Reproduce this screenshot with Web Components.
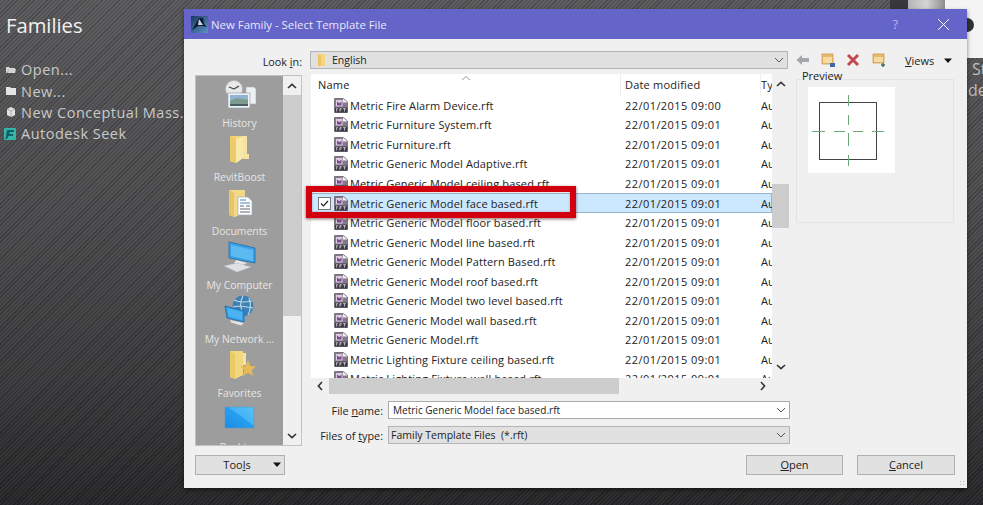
<!DOCTYPE html>
<html lang="en"><head><meta charset="utf-8"><title>New Family</title>
<style>
html,body{margin:0;padding:0;width:983px;height:505px;overflow:hidden;font-family:"Open Sans","Noto Sans",sans-serif}
</style></head><body>
<revit-desktop>
  <family-sidebar></family-sidebar>
  <template-dialog></template-dialog>
</revit-desktop>
<script>
const ICONS={
rft:`<svg viewBox="0 0 14 15" width="14" height="15"><path d="M.5.5h9l4 3.500v10.500H.5z" fill="#85798c" stroke="#5e5563" stroke-width=".7"/><path d="M9 .5v4h4.500z" fill="#f4f4f4"/><rect x="2" y="2" width="6.500" height="6.500" fill="#dccde0"/><path d="M3 7.500V3.500l2.500 1.800L7.500 3.500v4z" fill="#7a4a8c"/><rect x="1" y="9.500" width="12.300" height="5" fill="#3f3a47"/><path d="M2.200 10.700h1.800M2.600 10.700v2.800M5.800 10.700v2.800M5.800 10.700h2M5.800 12h1.600M9 10.700h3M10.500 10.700v2.800" stroke="#e6e6e6" stroke-width=".7" fill="none"/></svg>`,
folder:`<svg viewBox="0 0 32 32" width="32" height="32"><path d="M6 3h13v22l-7 5-6-2z" fill="#f0d27a"/><path d="M19 3h4v18h2v5h-6z" fill="#f6e3a1"/><path d="M12 6l7-3v22l-7 5z" fill="#fae8a8"/><path d="M6 3v25l6 2V6z" fill="#eccb6a"/></svg>`,
docs:`<svg viewBox="0 0 32 32" width="32" height="32"><path d="M5 3h16v22l-10 5-6-2z" fill="#f3d888"/><path d="M5 3v25l5 2V6z" fill="#e8c665"/><path d="M14 10h10l4 4v14H14z" fill="#fff" stroke="#9fb0bd" stroke-width=".7"/><path d="M16 13h6M16 16h10" stroke="#4d7fb5" stroke-width="1.200"/><path d="M16 19h4M22 19h4M16 22h10M16 25h10" stroke="#5a6a77" stroke-width="1"/></svg>`,
history:`<svg viewBox="0 0 32 30" width="32" height="30"><path d="M22 7h8l2 2v15H22z" fill="#eef1f4" stroke="#a7b0b8" stroke-width=".6"/><circle cx="10" cy="9" r="8.500" fill="#e6e8e9" stroke="#b5b5b5" stroke-width=".7"/><path d="M10 9l5-3M10 9L5 7" stroke="#444" stroke-width="1.300" fill="none"/><rect x="4" y="13" width="22" height="15" fill="#f0f2f4" stroke="#94a4b0" stroke-width=".7"/><rect x="6" y="15" width="18" height="6" fill="#8fb3d0"/><path d="M6 21l7-3 11 2v5H6z" fill="#7c9b8e"/><rect x="6" y="24" width="18" height="2" fill="#4a5e66"/></svg>`,
computer:`<svg viewBox="0 0 34 32" width="34" height="32"><path d="M6 1l26 6v15L6 17z" fill="#3aa0e8" stroke="#1d6ea8" stroke-width=".8"/><path d="M8 4l22 5v11L8 15z" fill="#5cb9f2"/><path d="M13 19l11 3-4 2-9-2z" fill="#e4e7ea"/><path d="M1 25l13-3 14 4-14 5z" fill="#dfe2e5" stroke="#b9bcbf" stroke-width=".5"/></svg>`,
network:`<svg viewBox="0 0 32 32" width="32" height="32"><circle cx="19" cy="11" r="10.500" fill="#3f80b2"/><path d="M10 5c6 3 13 2 18 1M9 12c6-2 13 0 20 1M19 .5c-3 6-3 14 1 21M25 3c2 5 2 11-1 17" stroke="#bcdaec" stroke-width="1.100" fill="none"/><path d="M1 11l19 5v11L3 23z" fill="#2f9fe8" stroke="#1a679e" stroke-width=".8"/><path d="M3 13l15 4v8L5 21.500z" fill="#4cb2f0"/><path d="M6 25l14 3-3 2.500-10-3z" fill="#dfe3e6"/></svg>`,
fav:`<svg viewBox="0 0 32 32" width="32" height="32"><path d="M6 2h13v24l-8 4-5-2z" fill="#f2d781"/><path d="M19 4h3v12h-3z" fill="#f6e3a1"/><path d="M6 2v26l5 2V5z" fill="#ebc966"/><path d="M24 11l2.200 6 5.800.4-4.500 3.700 1.600 5.900-5.100-3.300-5.100 3.300 1.600-5.900-4.500-3.700 5.800-.4z" fill="#e6bb55"/></svg>`,
desktop:`<svg viewBox="0 0 32 32" width="32" height="32"><defs><linearGradient id="dk" x1="0" y1="1" x2="1" y2="0"><stop offset="0" stop-color="#1c8ae6"/><stop offset=".55" stop-color="#27a0f0"/><stop offset=".56" stop-color="#45b4f6"/><stop offset="1" stop-color="#58c0f8"/></linearGradient></defs><rect x="1" y="4" width="29" height="21" fill="url(#dk)" stroke="#5e98c4" stroke-width=".6"/></svg>`,
small:`<svg viewBox="0 0 14 16" width="14" height="16"><path d="M5 2h7v12H5z" fill="#f4d87f"/><path d="M5 2v12h3V4z" fill="#ecc560"/></svg>`,
back:`<svg viewBox="0 0 13 12" width="13" height="12"><path d="M.5 6l5.500-5v3h7v4H6v3z" fill="#a3a7aa"/></svg>`,
up:`<svg viewBox="0 0 16 16" width="16" height="16"><path d="M2 2h11v10H2z" fill="#e7b96d" stroke="#cf9b4f" stroke-width=".8"/><rect x="3" y="5" width="9" height="6" fill="#f6dba0"/><path d="M10 11h5v4h-5z" fill="#3c68a8"/></svg>`,
del:`<svg viewBox="0 0 14 14" width="14" height="14"><path d="M2 2l10 10M12 2L2 12" stroke="#c4484f" stroke-width="3"/></svg>`,
newf:`<svg viewBox="0 0 16 16" width="16" height="16"><path d="M2 2h11v9H2z" fill="#e7b96d" stroke="#cf9b4f" stroke-width=".8"/><rect x="3" y="5" width="9" height="5" fill="#f6dba0"/><path d="M12 11v4M10 13h4" stroke="#3f6f4c" stroke-width="1.400"/></svg>`,
app:`<svg viewBox="0 0 17 17" width="17" height="17"><defs><linearGradient id="ap" x1="0" y1="0" x2="1" y2="1"><stop offset="0" stop-color="#19375f"/><stop offset="1" stop-color="#5e93c9"/></linearGradient></defs><rect width="17" height="17" fill="url(#ap)"/><path d="M1 14L8 2h4l1 6 3 3-5-1-4 0z" fill="#0d1b33"/><path d="M8 3l-1 6 5 0z" fill="#cfd7e2"/></svg>`,
up2:`<svg viewBox="0 0 10 6" width="10" height="6"><path d="M1 5l4-3.600L9 5" fill="none" stroke="#333" stroke-width="1.600"/></svg>`,
dn2:`<svg viewBox="0 0 10 6" width="10" height="6"><path d="M1 1l4 3.600L9 1" fill="none" stroke="#333" stroke-width="1.600"/></svg>`,
lt2:`<svg viewBox="0 0 6 10" width="6" height="10"><path d="M5 1L1.400 5 5 9" fill="none" stroke="#333" stroke-width="1.600"/></svg>`,
rt2:`<svg viewBox="0 0 6 10" width="6" height="10"><path d="M1 1l3.600 4L1 9" fill="none" stroke="#333" stroke-width="1.600"/></svg>`,
chev:`<svg viewBox="0 0 10 6" width="10" height="6"><path d="M1 1l4 4 4-4" fill="none" stroke="#555" stroke-width="1"/></svg>`,
caret:`<svg viewBox="0 0 10 6" width="10" height="6"><path d="M1 .5h8L5 5z" fill="#111"/></svg>`,
open:`<svg viewBox="0 0 10 10" width="10" height="10"><path d="M0 2h3l1 1h5v1H3L1.500 8H9l1-4H3L1 8H0z" fill="#d5d5d5"/></svg>`,
newi:`<svg viewBox="0 0 10 10" width="10" height="10"><path d="M0 1h4l1 1h5v7H0z" fill="#e4e4e4"/></svg>`,
mass:`<svg viewBox="0 0 10 10" width="10" height="10"><path d="M1 2l4-2 4 2v6l-4 2-4-2z" fill="#e2e2e2"/><path d="M1 2l4 2 4-2M5 4v6" stroke="#888" stroke-width=".6" fill="none"/></svg>`,
seek:`<svg viewBox="0 0 12 12" width="12" height="12"><rect width="12" height="12" rx="1" fill="#35b5a8"/><path d="M3 2h7v2H6L5 6h4v2H4.500L3 11H1.500z" fill="#115f66"/></svg>`
};
function def(name,css,html,init){customElements.define(name,class extends HTMLElement{connectedCallback(){if(this.shadowRoot)return;const r=this.attachShadow({mode:'open'});r.innerHTML=`<style>${css}</style>`+(typeof html==='function'?html(this):html);init&&init(r,this)}})}

def('x-icon',':host{display:inline-flex;flex:none;align-items:center;justify-content:center;line-height:0}',h=>ICONS[h.getAttribute('name')]);

def('revit-desktop',`:host{display:block;position:relative;width:983px;height:505px;overflow:hidden;
 background:repeating-linear-gradient(135deg,rgba(0,0,0,.16) 0 1px,rgba(255,255,255,.03) 1px 3px),linear-gradient(#59595b 0,#4c4c4e 40%,#3a3a3c 75%,#262628 100%)}
 .dark{position:absolute;left:890px;top:0;width:18px;height:9px;background:#38383a}
 .shot{position:absolute;left:908px;top:0;width:75px;height:58px;background:#f4f4f4}
 .shot i{position:absolute;left:0;top:0;width:37px;height:9px;background:linear-gradient(90deg,#b5b5b5,#d4d4d4 50%,#8d8d8d)}
 .shot b{position:absolute;left:52px;top:18px;width:14px;height:14px;border-radius:50%;background:#333}
 .peek{position:absolute;left:968px;top:59px;color:#bdbdbd;font-size:16px;line-height:21px;white-space:pre;width:15px;overflow:hidden}
 .peek span{display:block;margin-left:4px}`,
 `<div class="dark"></div><div class="shot"><i></i><b></b></div><div class="peek"><span>St</span>ded</div><slot></slot>`);

def('family-sidebar',`:host{display:block;width:184px;padding:13px 0 0 6px;box-sizing:border-box;color:#d6d6d6;overflow:hidden;white-space:nowrap}
 h1{margin:0 0 21px;font-size:20.200px;line-height:25px;font-weight:400;color:#f2f2f2}
 .i{display:flex;align-items:center;height:21.400px;font-size:14.500px;letter-spacing:.5px;color:#c9c9c9}
 .i x-icon{width:15px;margin-right:0;justify-content:flex-start}`,
 `<h1>Families</h1>
 <div class="i"><x-icon name="open"></x-icon>Open...</div>
 <div class="i"><x-icon name="newi"></x-icon>New...</div>
 <div class="i"><x-icon name="mass"></x-icon>New Conceptual Mass...</div>
 <div class="i" style="margin-left:-2px"><x-icon name="seek" style="width:17px"></x-icon>Autodesk Seek</div>`);

def('title-bar',`:host{display:flex;align-items:center;height:30px;background:#6464c9;color:#e8e8f8;font-size:11.400px;padding-left:7px;flex:none}
 span{margin-left:3px}
 .sp{flex:1}
 .q{font-size:13px;color:#b9b9ea;margin-right:40px}
 svg{margin-right:18px}`,
 `<x-icon name="app"></x-icon><span>New Family - Select Template File</span><div class="sp"></div><div class="q">?</div>
 <svg width="11" height="11" viewBox="0 0 11 11"><path d="M0 0l11 11M11 0L0 11" stroke="#fff" stroke-width="1"/></svg>`);

def('combo-box',`:host{display:flex;align-items:center;box-sizing:border-box;height:18px;background:#e1e1e1;border:1px solid #b4b4b4;font-size:10.500px;color:#222;padding:0 3px 0 2px;white-space:nowrap}
 :host([white]){background:#fff;border-color:#aaa;font-size:10px;padding-left:4px;letter-spacing:.02px}
 .t{flex:1;overflow:hidden;line-height:16px}`,
 `<slot name="i"></slot><div class="t"><slot></slot></div><x-icon name="chev"></x-icon>`);

def('push-button',`:host{display:flex;align-items:center;justify-content:center;box-sizing:border-box;height:20px;background:#e1e1e1;border:1px solid #b0b0b0;font-size:11px;color:#222;line-height:16px;padding-bottom:1px}`,`<slot></slot>`);

def('place-item',`:host{display:flex;flex-direction:column;align-items:center;height:54px;padding-top:2px;box-sizing:border-box;flex:none;color:#e6e6e6;font-size:10.400px;white-space:nowrap}
 .i{height:32px;display:flex;align-items:center;justify-content:center}
 .l{margin-top:4px;line-height:16px}`,
 h=>`<div class="i"><x-icon name="${h.getAttribute('icon')}"></x-icon></div><div class="l">${h.getAttribute('label')}</div>`);

def('places-bar',`:host{display:flex;width:107px;height:371px;box-sizing:border-box;border:1px solid #c2c2c2;flex:none;background:#f0f0f0}
 .g{width:87px;background:#9d9d9d;overflow:hidden;display:flex;flex-direction:column;padding-top:1px;box-sizing:border-box;flex:none}
 .s{flex:1;display:flex;flex-direction:column}
 .b{height:19px;display:flex;align-items:center;justify-content:center;flex:none}
 .th{height:221px;background:#cdcdcd;flex:none}.tr{flex:1}`,
 `<div class="g"><slot></slot></div><div class="s"><div class="b"><x-icon name="up2"></x-icon></div><div class="th"></div><div class="tr"></div><div class="b"><x-icon name="dn2"></x-icon></div></div>`);

def('file-row',`:host{display:flex;height:19.550px;align-items:center;flex:none;font-size:11px;color:#222;white-space:nowrap;box-sizing:border-box;overflow:hidden}
 :host([sel]){background:#cce8ff;box-shadow:inset 0 0 0 1px #99b4c8}
 .c{width:23px;flex:none;display:flex;justify-content:flex-end}
 .n{width:287px;flex:none;display:flex;align-items:center;letter-spacing:.14px}
 .n x-icon{width:14px;margin-right:2px}
 .d{width:140px;flex:none;padding-left:4px;box-sizing:border-box;letter-spacing:.44px}
 .t{flex:1;overflow:hidden}
 .cb{width:11px;height:11px;border:1px solid #777;background:#fff;margin-right:3px;display:flex}`,
 h=>`<div class="c">${h.hasAttribute('sel')?`<div class="cb"><svg width="11" height="11" viewBox="0 0 11 11"><path d="M2 5.500l2.500 2.500L9 3" fill="none" stroke="#222" stroke-width="1.200"/></svg></div>`:''}</div>
 <div class="n"><x-icon name="rft"></x-icon><span><slot></slot></span></div><div class="d">22/01/2015 ${h.getAttribute('time')||'09:01'}</div><div class="t">Autodesk</div>`);

def('file-list',`:host{display:grid;grid-template-columns:461px 17px;grid-template-rows:304px 16px;width:478px;height:320px;margin-left:1px;flex:none;box-sizing:border-box}
 .l{background:#fff;overflow:hidden;display:flex;flex-direction:column;position:relative}
 .h{height:21.500px;display:flex;align-items:center;font-size:11px;color:#222;flex:none;letter-spacing:.2px}
 .h div{box-sizing:border-box;height:100%;display:flex;align-items:center;border-right:1px solid #eee;overflow:hidden;white-space:nowrap;position:relative}
 .h .a{width:310px;padding-left:7px}.h .b{width:140px;padding-left:4px}.h .c{flex:1;border:0;padding-left:0}
 .car{position:absolute;left:150px;top:1px}
 .v{display:flex;flex-direction:column}
 .v .ar{height:21px;display:flex;align-items:center;justify-content:center;flex:none;padding-bottom:1px;box-sizing:border-box}
 .v .gap{height:89px;flex:none}.v .th{height:44px;background:#cdcdcd;flex:none}.v .tr{flex:1}
 .hs{display:flex;align-items:center;background:#f0f0f0}
 .hs .ar{width:18px;display:flex;justify-content:center;flex:none}
 .hs .th{width:290px;height:16px;background:#cdcdcd;flex:none}.hs .tr{flex:1}
 .car svg{display:block}`,
 `<div class="l"><div class="h"><div class="a">Name<span class="car"><svg width="10" height="6" viewBox="0 0 10 6"><path d="M1 5l4-3.500L9 5" fill="none" stroke="#999" stroke-width="1"/></svg></span></div><div class="b">Date modified</div><div class="c">Type</div></div><slot></slot></div>
 <div class="v"><div class="ar"><x-icon name="up2"></x-icon></div><div class="gap"></div><div class="th"></div><div class="tr"></div><div class="ar"><x-icon name="dn2"></x-icon></div></div>
 <div class="hs"><div class="ar"><x-icon name="lt2"></x-icon></div><div class="th"></div><div class="tr"></div><div class="ar"><x-icon name="rt2"></x-icon></div></div><div></div>`);

def('preview-box',`:host{display:block;position:relative;box-sizing:border-box;width:158px;height:144px;margin:4px 0 0 1px;border:1px solid #e4e4e4;flex:none}
 .leg{position:absolute;left:4px;top:-12px;background:#f0f0f0;padding:0 1px;font-size:11px;line-height:15px;color:#222}
 .p{margin:7px 0 0 10.500px;width:87px;height:86px;background:#fff}
 svg{display:block}`,
 `<div class="leg">Preview</div><div class="p"><svg width="87" height="86" viewBox="0 0 87 86"><rect x="11.500" y="15.500" width="57" height="57" fill="none" stroke="#444" stroke-width="1"/><path d="M40.500 8v11M40.500 28v10M40.500 46v13M40.500 68v11M4 44.500h13M26 44.500h11M45 44.500h10M64 44.500h12" stroke="#6aa877" stroke-width="1" fill="none"/></svg></div>`);

def('red-mark',`:host{position:absolute;left:122px;top:177px;width:270px;height:32px;box-sizing:border-box;border:6.500px solid #d2000f;box-shadow:0 1px 3px rgba(60,0,0,.6), inset 0 0 2px rgba(90,0,0,.4);pointer-events:none}`,``);

def('template-dialog',`:host{display:flex;flex-direction:column;position:absolute;left:184px;top:9px;width:783px;height:479px;background:#f0f0f0;box-shadow:0 2px 4px rgba(0,0,0,.5);overflow:hidden}
 .body{flex:1;display:flex;flex-direction:column;padding:12px 12px 0 11px;position:relative;min-height:0}
 .top{display:flex;align-items:center;height:18px;flex:none}
 .lab{font-size:10.800px;color:#222;white-space:nowrap}
 .top .lab{width:107px;text-align:right;flex:none;padding-top:2px;box-sizing:border-box}
 .top combo-box{width:478px;margin-left:8px;flex:none}
 .nav{display:flex;align-items:center;margin-left:8px;flex:1}
 .nav x-icon:nth-child(1){margin-right:11px}
 .nav x-icon:nth-child(2){margin-right:10px}
 .nav x-icon:nth-child(3){margin-right:11px}
 .views{font-size:11px;color:#222;margin-left:18px;display:flex;align-items:center;gap:9px;padding-top:1px}
 .mid{display:flex;margin-top:6px;flex:none;height:371px}
 .centre{margin-left:8px;width:480px;flex:none;display:flex;flex-direction:column;margin-top:-1px}
 .fr{display:flex;align-items:center;margin-top:7px;height:18px}
 .fr+.fr{margin-top:7px}
 .fr .lab{width:73px;text-align:right;flex:none}
 .fr combo-box{margin-left:5px;width:402px;flex:none}
 .bot{display:flex;align-items:center;margin-top:9px;flex:none}
 .tools{width:90px;display:flex;padding:0 2px 1px 0}
 .tools span{flex:1;text-align:center;padding-left:6px}
 .sp{flex:1}
 .o{width:97px;margin-right:14px}.c{width:98px}
 .grip{position:absolute;right:2px;bottom:2px;width:6px;height:6px;background:radial-gradient(circle,#bbb 0 .8px,transparent 1px) 0 0/3px 3px}
 u{text-underline-offset:1px}`,
 `<title-bar></title-bar>
 <div class="body">
  <div class="top"><div class="lab">Look <u>i</u>n:</div>
   <combo-box><x-icon slot="i" name="small"></x-icon><span style="margin-left:5px">English</span></combo-box>
   <div class="nav"><x-icon name="back"></x-icon><x-icon name="up"></x-icon><x-icon name="del"></x-icon><x-icon name="newf"></x-icon><div class="views"><span><u>V</u>iews</span><x-icon name="caret"></x-icon></div></div></div>
  <div class="mid">
   <places-bar>
    <place-item icon="history" label="History"></place-item>
    <place-item icon="folder" label="RevitBoost"></place-item>
    <place-item icon="docs" label="Documents"></place-item>
    <place-item icon="computer" label="My Computer"></place-item>
    <place-item icon="network" label="My Network ..."></place-item>
    <place-item icon="fav" label="Favorites"></place-item>
    <place-item icon="desktop" label="Desktop"></place-item>
   </places-bar>
   <div class="centre">
    <file-list>
     <file-row time="09:00">Metric Fire Alarm Device.rft</file-row>
     <file-row>Metric Furniture System.rft</file-row>
     <file-row>Metric Furniture.rft</file-row>
     <file-row>Metric Generic Model Adaptive.rft</file-row>
     <file-row>Metric Generic Model ceiling based.rft</file-row>
     <file-row sel>Metric Generic Model face based.rft</file-row>
     <file-row>Metric Generic Model floor based.rft</file-row>
     <file-row>Metric Generic Model line based.rft</file-row>
     <file-row>Metric Generic Model Pattern Based.rft</file-row>
     <file-row>Metric Generic Model roof based.rft</file-row>
     <file-row>Metric Generic Model two level based.rft</file-row>
     <file-row>Metric Generic Model wall based.rft</file-row>
     <file-row>Metric Generic Model.rft</file-row>
     <file-row>Metric Lighting Fixture ceiling based.rft</file-row>
     <file-row>Metric Lighting Fixture wall based.rft</file-row>
    </file-list>
    <div class="fr"><div class="lab">File <u>n</u>ame:</div><combo-box white>Metric Generic Model face based.rft</combo-box></div>
    <div class="fr"><div class="lab">Files of <u>t</u>ype:</div><combo-box>Family Template Files&nbsp; (*.rft)</combo-box></div>
   </div>
   <preview-box style="margin-left:6px"></preview-box>
  </div>
  <div class="bot"><push-button class="tools"><span>Too<u>l</u>s</span><x-icon name="caret"></x-icon></push-button><div class="sp"></div><push-button class="o"><span><u>O</u>pen</span></push-button><push-button class="c"><span><u>C</u>ancel</span></push-button></div>
  <div class="grip"></div>
 </div>
 <red-mark></red-mark>`);
</script>
</body></html>
